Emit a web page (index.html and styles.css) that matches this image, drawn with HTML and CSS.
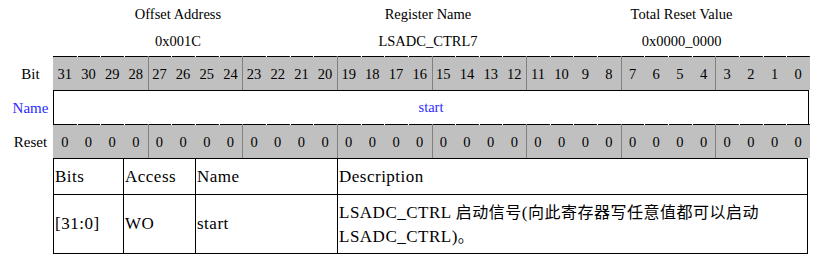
FILE: index.html
```html
<!DOCTYPE html>
<html lang="zh">
<head>
<meta charset="utf-8">
<title>LSADC_CTRL7</title>
<link rel="stylesheet" href="styles.css">
</head>
<body>
<div class="page">
  <div class="regmap">
    <div class="head">
      <div class="head-col"><div>Offset Address</div><div>0x001C</div></div>
      <div class="head-col"><div>Register Name</div><div>LSADC_CTRL7</div></div>
      <div class="head-col"><div>Total Reset Value</div><div>0x0000_0000</div></div>
    </div>

    <div class="label">Bit</div>
    <div class="cells bits">
      <div class="b">31</div><div class="b">30</div><div class="b">29</div><div class="b">28</div>
      <div class="b">27</div><div class="b">26</div><div class="b">25</div><div class="b">24</div>
      <div class="b">23</div><div class="b">22</div><div class="b">21</div><div class="b">20</div>
      <div class="b">19</div><div class="b">18</div><div class="b">17</div><div class="b">16</div>
      <div class="b">15</div><div class="b">14</div><div class="b">13</div><div class="b">12</div>
      <div class="b">11</div><div class="b">10</div><div class="b">9</div><div class="b">8</div>
      <div class="b">7</div><div class="b">6</div><div class="b">5</div><div class="b">4</div>
      <div class="b">3</div><div class="b">2</div><div class="b">1</div><div class="b">0</div>
    </div>

    <div class="label label-name">Name</div>
    <div class="namebox">start</div>

    <div class="label">Reset</div>
    <div class="cells resets">
      <div class="b">0</div><div class="b">0</div><div class="b">0</div><div class="b">0</div>
      <div class="b">0</div><div class="b">0</div><div class="b">0</div><div class="b">0</div>
      <div class="b">0</div><div class="b">0</div><div class="b">0</div><div class="b">0</div>
      <div class="b">0</div><div class="b">0</div><div class="b">0</div><div class="b">0</div>
      <div class="b">0</div><div class="b">0</div><div class="b">0</div><div class="b">0</div>
      <div class="b">0</div><div class="b">0</div><div class="b">0</div><div class="b">0</div>
      <div class="b">0</div><div class="b">0</div><div class="b">0</div><div class="b">0</div>
      <div class="b">0</div><div class="b">0</div><div class="b">0</div><div class="b">0</div>
    </div>

    <table class="desc">
      <colgroup>
        <col class="c-bits"><col class="c-access"><col class="c-name"><col class="c-desc">
      </colgroup>
      <tr class="desc-head">
        <td>Bits</td><td>Access</td><td>Name</td><td>Description</td>
      </tr>
      <tr class="desc-row">
        <td>[31:0]</td><td>WO</td><td>start</td>
        <td>LSADC_CTRL <span class="cjk">启动信号</span>(<span class="cjk">向此寄存器写任意值都可以启动</span> LSADC_CTRL)<span class="cjk">。</span></td>
      </tr>
    </table>
  </div>
</div>
</body>
</html>
```

FILE: styles.css
```css
html, body {
  margin: 0;
  padding: 0;
  background: #ffffff;
}

.page {
  padding: 1px 0 0 8px;
  font-family: "Liberation Serif", "Times New Roman", serif;
  color: #000;
}

.regmap {
  display: grid;
  grid-template-columns: 45px 757px;
  grid-template-rows: auto 34px 34px 34px auto;
}

.head {
  grid-column: 2;
  display: grid;
  grid-template-columns: 250px 250px 1fr;
  font-size: 14.5px;
  line-height: 27px;
  text-align: center;
  margin-bottom: 1px;
}

.label {
  grid-column: 1;
  display: flex;
  align-items: center;
  justify-content: center;
  font-size: 15px;
  padding-top: 2px;
}

.label-name {
  color: #2b2bff;
}

.cells {
  grid-column: 2;
  display: grid;
  grid-template-columns: repeat(32, 1fr);
}

.b {
  display: flex;
  align-items: center;
  justify-content: center;
  font-size: 14.5px;
  padding-top: 2px;
  background:
    linear-gradient(to right, #ffffff 1px, #000000 1px) top / 100% 1px no-repeat,
    #c0c0c0;
}

.b:first-child {
  background:
    linear-gradient(#000000, #000000) top / 100% 1px no-repeat,
    #c0c0c0;
}

.b:nth-child(4n+1):not(:first-child) {
  box-shadow: inset 1px 0 0 #808080;
}

.namebox {
  grid-column: 2;
  border: 1px solid #000;
  border-bottom: 0;
  margin-right: 1px;
  display: flex;
  align-items: center;
  justify-content: center;
  color: #2b2bff;
  font-size: 14.5px;
}

.desc {
  grid-column: 2;
  width: 755px;
  border-collapse: collapse;
  font-size: 17px;
  letter-spacing: 0.5px;
  table-layout: fixed;
}

.desc td {
  border: 1px solid #000;
  padding: 0 2px 0 1px;
  vertical-align: middle;
  text-align: left;
}

.c-bits { width: 70px; }
.c-access { width: 72px; }
.c-name { width: 142px; }

.desc-head td {
  height: 35px;
  line-height: 20px;
}

.desc-row td {
  height: 58px;
  line-height: 22.5px;
}

.cjk {
  font-family: "Noto Sans CJK SC", sans-serif;
  font-size: 16px;
  letter-spacing: 0.5px;
}
```
